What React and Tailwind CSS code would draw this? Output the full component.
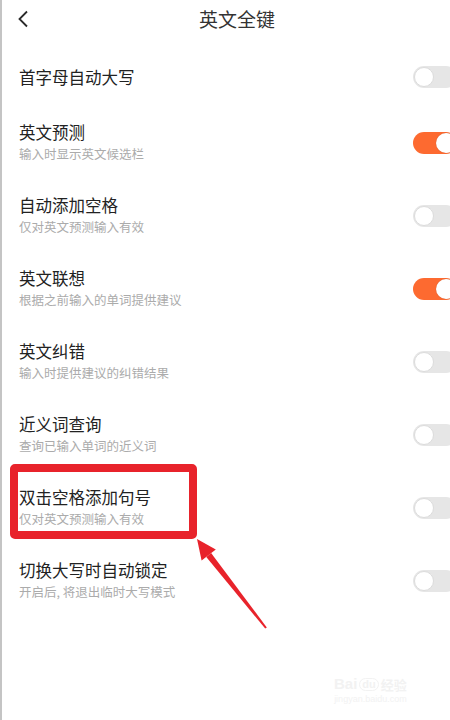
import React from "react";

const rows = [
  { t: "英文预测", s: "输入时显示英文候选栏", on: true },
  { t: "自动添加空格", s: "仅对英文预测输入有效", on: false },
  { t: "英文联想", s: "根据之前输入的单词提供建议", on: true },
  { t: "英文纠错", s: "输入时提供建议的纠错结果", on: false },
  { t: "近义词查询", s: "查询已输入单词的近义词", on: false },
  { t: "双击空格添加句号", s: "仅对英文预测输入有效", on: false },
  { t: "切换大写时自动锁定", s: "开启后, 将退出临时大写模式", on: false },
];

function Toggle({ on }) {
  return (
    <div className="w-[37px] h-[22px] overflow-hidden shrink-0">
      <div
        className={
          on
            ? "relative w-[44px] h-[22px] rounded-full bg-[#fd6a30]"
            : "relative w-[44px] h-[22px] rounded-full bg-[#e6e6e6]"
        }
      >
        <div
          className={
            on
              ? "absolute top-[1px] left-[23px] w-[20px] h-[20px] rounded-full bg-white shadow-[0_0_1px_rgba(0,0,0,0.25)]"
              : "absolute top-[1px] left-[1px] w-[20px] h-[20px] rounded-full bg-white border border-[#dcdcdc]"
          }
        />
      </div>
    </div>
  );
}

export default function App() {
  return (
    <div
      className="relative w-[450px] h-[720px] overflow-hidden bg-white border-l-2 border-[#c4c4c4]"
      style={{ fontFamily: '"Noto Sans CJK SC", "Noto Sans", sans-serif' }}
    >
      <div className="flex items-center h-[37px]">
        <div className="pl-[15px] w-[197px] flex items-center">
          <svg width="12" height="18" viewBox="0 0 12 18">
            <polyline
              points="10,1.5 2.5,9 10,16.5"
              fill="none"
              stroke="#2a2a2a"
              strokeWidth="1.8"
            />
          </svg>
        </div>
        <div className="text-[19px] leading-[24px] text-[#333]">英文全键</div>
      </div>

      <div className="pt-[11px]">
        <div className="flex items-center h-[58px] pl-[17px]">
          <div className="flex-1 text-[16.5px] leading-[24px] text-[#222]">首字母自动大写</div>
          <Toggle on={false} />
        </div>
        {rows.map((r) => (
          <div key={r.t} className="flex items-center h-[73px] pl-[17px]">
            <div className="flex-1 flex flex-col pb-[1px]">
              <div className="text-[16.5px] leading-[23px] text-[#222]">{r.t}</div>
              <div className="text-[12.5px] leading-[19px] text-[#ababab]">{r.s}</div>
            </div>
            <Toggle on={r.on} />
          </div>
        ))}
      </div>

      <div className="absolute left-[8px] top-[464px] w-[187px] h-[75px] border-[8px] border-[#e8232b] rounded-[5px]" />

      <svg
        className="absolute left-0 top-0 pointer-events-none"
        width="450"
        height="720"
        viewBox="0 0 450 720"
      >
        <polygon
          points="209.1,553.1 204.3,556.9 263.2,628.6 264.8,627.4"
          fill="#e8232b"
        />
        <polygon points="195,539 213.8,549.4 199.6,560.6" fill="#e8232b" />
      </svg>

      <div className="absolute left-[332px] top-[676px] flex flex-col items-center text-[#f2f2f2]" style={{ fontFamily: '"Liberation Sans", sans-serif' }}>
        <div className="flex items-end gap-[2px] leading-none">
          <span className="text-[15px] font-bold">Bai</span>
          <span className="text-[11px] font-bold border border-[#f2f2f2] rounded-full px-[2px]">du</span>
          <span className="text-[13px] font-bold" style={{ fontFamily: '"Noto Sans CJK SC", sans-serif' }}>经验</span>
        </div>
        <div className="text-[9px] leading-[12px] mt-[2px]">jingyan.baidu.com</div>
      </div>
    </div>
  );
}
